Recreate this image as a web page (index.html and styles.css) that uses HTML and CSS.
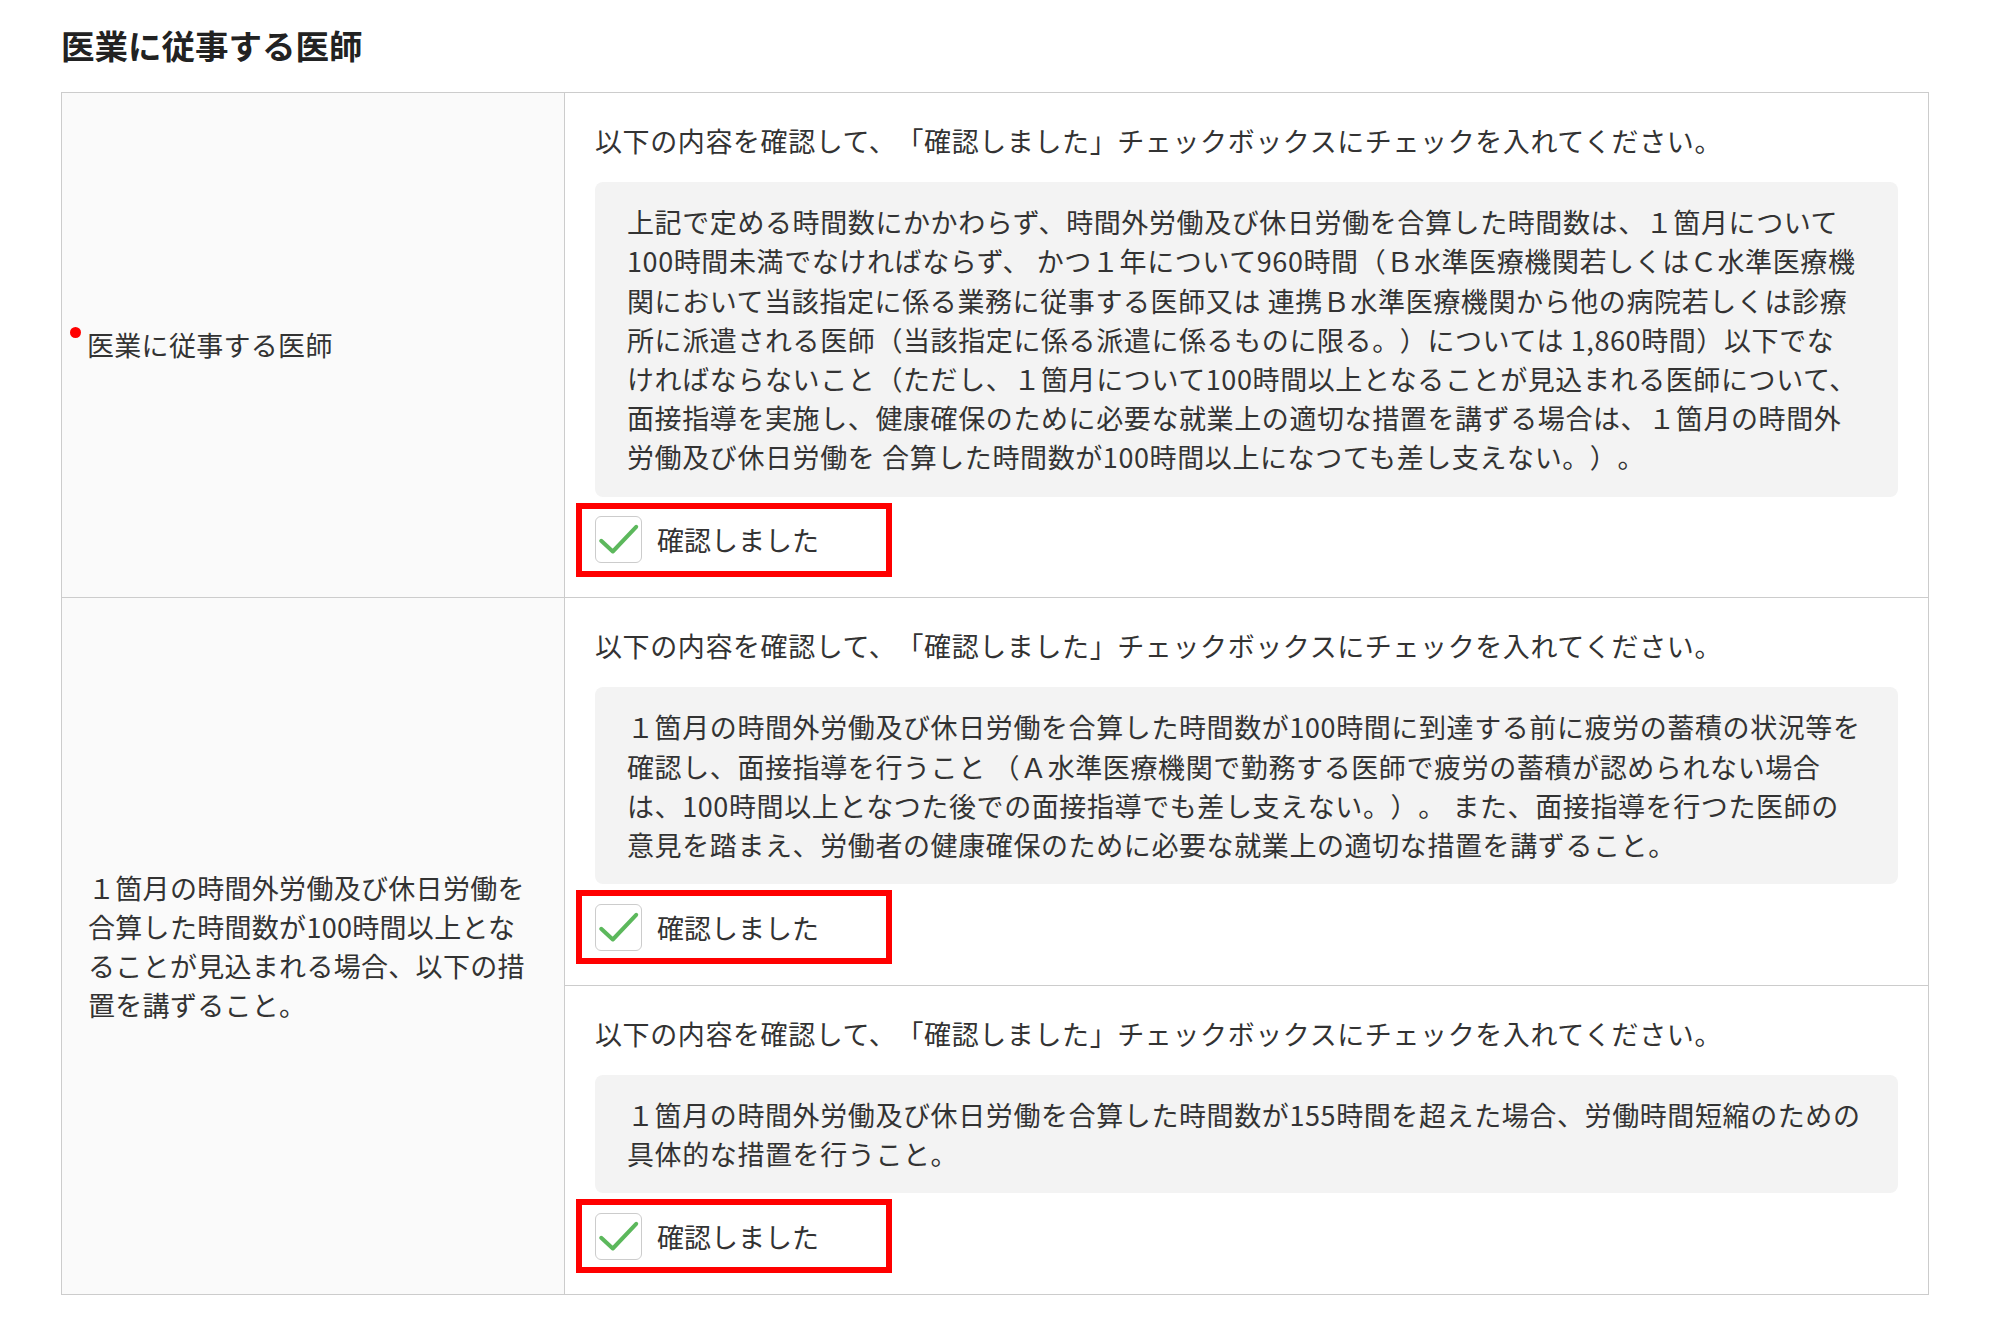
FILE: index.html
```html
<!DOCTYPE html>
<html lang="ja">
<head>
<meta charset="utf-8">
<title>医業に従事する医師</title>
<link rel="stylesheet" href="styles.css">
</head>
<body>
<main class="page">
  <h2 class="title">医業に従事する医師</h2>
  <div class="grid">
    <div class="label-cell row-first">
      <span class="req"><span class="dot"></span><span class="req-text">医業に従事する医師</span></span>
    </div>
    <div class="content-cell row-first">
      <div class="item">
        <p class="lead">以下の内容を確認して、「確認しました」チェックボックスにチェックを入れてください。</p>
        <div class="notice">上記で定める時間数にかかわらず、時間外労働及び休日労働を合算した時間数は、１箇月について<br>100時間未満でなければならず、 かつ１年について960時間（Ｂ水準医療機関若しくはＣ水準医療機<br>関において当該指定に係る業務に従事する医師又は 連携Ｂ水準医療機関から他の病院若しくは診療<br>所に派遣される医師（当該指定に係る派遣に係るものに限る。）については 1,860時間）以下でな<br>ければならないこと（ただし、１箇月について100時間以上となることが見込まれる医師について、<br>面接指導を実施し、健康確保のために必要な就業上の適切な措置を講ずる場合は、１箇月の時間外<br>労働及び休日労働を 合算した時間数が100時間以上になつても差し支えない。）。</div>
        <label class="confirm"><span class="checkbox"><svg viewBox="0 0 44 44" width="44" height="44"><path d="M5.2 23.8 L16.8 34.5 L40.2 9.8" fill="none" stroke="#5cb85c" stroke-width="4" stroke-linecap="round" stroke-linejoin="round"/></svg></span><span class="confirm-text">確認しました</span></label>
      </div>
    </div>
    <div class="label-cell row-second">
      <p class="label-text">１箇月の時間外労働及び休日労働を<br>合算した時間数が100時間以上とな<br>ることが見込まれる場合、以下の措<br>置を講ずること。</p>
    </div>
    <div class="content-cell">
      <div class="item">
        <p class="lead">以下の内容を確認して、「確認しました」チェックボックスにチェックを入れてください。</p>
        <div class="notice">１箇月の時間外労働及び休日労働を合算した時間数が100時間に到達する前に疲労の蓄積の状況等を<br>確認し、面接指導を行うこと （Ａ水準医療機関で勤務する医師で疲労の蓄積が認められない場合<br>は、100時間以上となつた後での面接指導でも差し支えない。）。 また、面接指導を行つた医師の<br>意見を踏まえ、労働者の健康確保のために必要な就業上の適切な措置を講ずること。</div>
        <label class="confirm"><span class="checkbox"><svg viewBox="0 0 44 44" width="44" height="44"><path d="M5.2 23.8 L16.8 34.5 L40.2 9.8" fill="none" stroke="#5cb85c" stroke-width="4" stroke-linecap="round" stroke-linejoin="round"/></svg></span><span class="confirm-text">確認しました</span></label>
      </div>
      <div class="item">
        <p class="lead">以下の内容を確認して、「確認しました」チェックボックスにチェックを入れてください。</p>
        <div class="notice">１箇月の時間外労働及び休日労働を合算した時間数が155時間を超えた場合、労働時間短縮のための<br>具体的な措置を行うこと。</div>
        <label class="confirm"><span class="checkbox"><svg viewBox="0 0 44 44" width="44" height="44"><path d="M5.2 23.8 L16.8 34.5 L40.2 9.8" fill="none" stroke="#5cb85c" stroke-width="4" stroke-linecap="round" stroke-linejoin="round"/></svg></span><span class="confirm-text">確認しました</span></label>
      </div>
    </div>
  </div>
</main>
</body>
</html>
```

FILE: styles.css
```css
html, body {
  margin: 0;
  background: #ffffff;
}

body {
  font-family: "Noto Sans CJK JP", "Noto Sans", sans-serif;
  color: #333333;
  text-spacing-trim: space-all;
  font-feature-settings: normal;
}

.page {
  padding: 25px 0 40px 61px;
}

.title {
  margin: 0 0 27px;
  font-size: 33.5px;
  line-height: 40px;
  font-weight: 700;
  color: #222222;
}

.grid {
  width: 1868px;
  box-sizing: border-box;
  border: 1px solid #cccccc;
  display: grid;
  grid-template-columns: 503px 1fr;
}

.label-cell {
  background: #fafafa;
  border-right: 1px solid #cccccc;
  display: flex;
  align-items: center;
  font-size: 27px;
  line-height: 39.2px;
  letter-spacing: 0.3px;
}

.row-first {
  border-bottom: 1px solid #cccccc;
}

.label-cell.row-first {
  padding-left: 8px;
}

.req {
  display: flex;
  align-items: flex-start;
}

.dot {
  width: 11px;
  height: 11px;
  border-radius: 50%;
  background: #ff0000;
  margin-top: 2px;
  margin-right: 6px;
  flex: none;
}

.label-cell.row-second {
  padding: 0 26px;
}

.label-text {
  margin: 0;
}

.item {
  padding: 28px 30px 20.5px 30px;
}

.item + .item {
  border-top: 1px solid #cccccc;
}

.lead {
  margin: 0;
  font-size: 27px;
  line-height: 39.2px;
  letter-spacing: 0.6px;
}

.notice {
  margin-top: 22px;
  background: #f3f3f3;
  border-radius: 8px;
  padding: 20px 28px 20px 32px;
  font-size: 27px;
  line-height: 39.2px;
  letter-spacing: 0.6px;
  white-space: nowrap;
}

.confirm {
  margin-top: 6px;
  margin-left: -19px;
  width: 316px;
  height: 74px;
  box-sizing: border-box;
  border: 6px solid #ff0000;
  display: flex;
  align-items: center;
  gap: 15px;
  padding-left: 13px;
}

.checkbox {
  width: 47px;
  height: 47px;
  box-sizing: border-box;
  border: 1.5px solid #cccccc;
  border-radius: 6px;
  background: #ffffff;
  flex: none;
}

.checkbox svg {
  display: block;
}

.confirm-text {
  font-size: 27px;
  line-height: 39.2px;
  color: #333333;
}
```
